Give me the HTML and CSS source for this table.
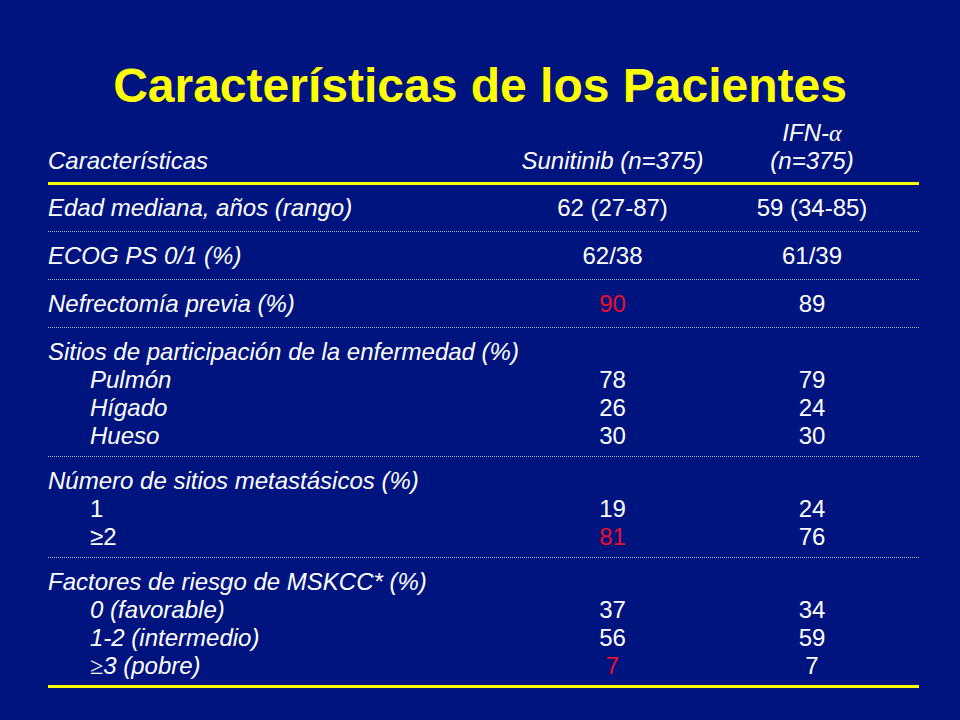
FILE: index.html
```html
<!DOCTYPE html>
<html lang="es">
<head>
<meta charset="utf-8">
<title>Características de los Pacientes</title>
<link rel="stylesheet" href="styles.css">
</head>
<body>
<div class="slide">
  <h1 class="title">Características de los Pacientes</h1>
  <div class="table">
    <div class="head">
      <div class="c1 it">Características</div>
      <div class="c2 it">Sunitinib (n=375)</div>
      <div class="c3 it">IFN-<span class="alpha">α</span><br>(n=375)</div>
    </div>
    <div class="row first">
      <div class="c1 it">Edad mediana, años (rango)</div>
      <div class="c2">62 (27-87)</div>
      <div class="c3">59 (34-85)</div>
    </div>
    <div class="row">
      <div class="c1 it">ECOG PS 0/1 (%)</div>
      <div class="c2">62/38</div>
      <div class="c3">61/39</div>
    </div>
    <div class="row">
      <div class="c1 it">Nefrectomía previa (%)</div>
      <div class="c2 red">90</div>
      <div class="c3">89</div>
    </div>
    <div class="row group">
      <div class="c1 it">Sitios de participación de la enfermedad (%)</div>
      <div class="c2"></div>
      <div class="c3"></div>
      <div class="c1 it sub">Pulmón</div>
      <div class="c2">78</div>
      <div class="c3">79</div>
      <div class="c1 it sub">Hígado</div>
      <div class="c2">26</div>
      <div class="c3">24</div>
      <div class="c1 it sub">Hueso</div>
      <div class="c2">30</div>
      <div class="c3">30</div>
    </div>
    <div class="row group">
      <div class="c1 it">Número de sitios metastásicos (%)</div>
      <div class="c2"></div>
      <div class="c3"></div>
      <div class="c1 sub">1</div>
      <div class="c2">19</div>
      <div class="c3">24</div>
      <div class="c1 sub">≥2</div>
      <div class="c2 red">81</div>
      <div class="c3">76</div>
    </div>
    <div class="row group last">
      <div class="c1 it">Factores de riesgo de MSKCC* (%)</div>
      <div class="c2"></div>
      <div class="c3"></div>
      <div class="c1 it sub">0 (favorable)</div>
      <div class="c2">37</div>
      <div class="c3">34</div>
      <div class="c1 it sub">1-2 (intermedio)</div>
      <div class="c2">56</div>
      <div class="c3">59</div>
      <div class="c1 it sub"><span class="sym">≥</span>3 (pobre)</div>
      <div class="c2 red">7</div>
      <div class="c3">7</div>
    </div>
  </div>
</div>
</body>
</html>
```

FILE: styles.css
```css
html, body {
  margin: 0;
  padding: 0;
}

body {
  background: #001480;
  width: 960px;
  height: 720px;
  overflow: hidden;
  font-family: "Liberation Sans", Arial, sans-serif;
  color: #ffffff;
}

.slide {
  width: 960px;
  height: 720px;
  display: flex;
  flex-direction: column;
  align-items: center;
}

.title {
  margin: 62px 0 0;
  height: 48px;
  font-size: 48px;
  line-height: 48px;
  font-weight: bold;
  color: #ffff00;
  text-align: center;
  white-space: nowrap;
}

.table {
  margin-top: 9px;
  width: 871px;
  margin-left: 7px;
  font-size: 24px;
  line-height: 28px;
}

.head,
.row {
  display: grid;
  grid-template-columns: 472px 185px 214px;
}

.head {
  align-items: end;
  padding-bottom: 7px;
  border-bottom: 3px solid #ffff00;
}

.row {
  padding: 10px 0 9px;
  border-bottom: 1px dotted #b4b8cc;
}

.row.first {
  padding-top: 9px;
}

.row.group {
  padding: 10px 0 6px;
}

.row.last {
  padding-bottom: 5px;
  border-bottom: 3px solid #ffff00;
}

.c1 {
  text-align: left;
  white-space: nowrap;
}

.c2,
.c3 {
  text-align: center;
  white-space: nowrap;
}

.it {
  font-style: italic;
}

.sub {
  padding-left: 42px;
}

.red {
  color: #e8102c;
}

.alpha {
  font-family: "Liberation Serif", "Times New Roman", serif;
  font-style: italic;
}

.sym {
  font-family: "Liberation Serif", "Times New Roman", serif;
  font-style: italic;
}
```
